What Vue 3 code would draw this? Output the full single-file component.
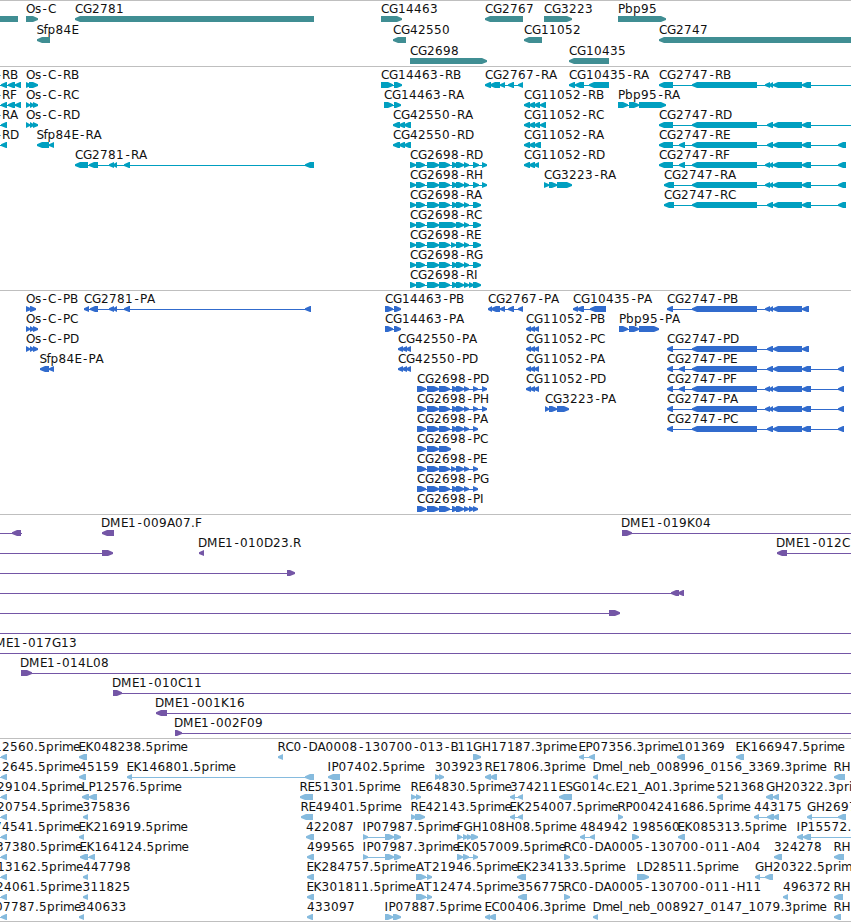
<template>
  <div class="browser">
    <section v-for="track in tracks" :key="track.name" class="track" :class="track.name">
      <svg class="canvas" width="851" :height="track.height">
        <g v-for="(item, i) in track.items" :key="i" :transform="`translate(0 ${item.row * track.pitch})`">
          <rect v-if="item.to > item.from" :x="item.from" y="18" :width="item.to - item.from" height="1"/>
          <polygon v-for="(exon, j) in item.exons" :key="j" :points="arrow(exon, item.dir)"/>
          <text v-if="item.label" :x="glyphs(item.label, item.x)" y="12">{{ item.label }}</text>
        </g>
      </svg>
    </section>
  </div>
</template>

<script setup>
// glyph advances of the label font, everything else is 8px wide
const advances = {
  G: 9, O: 9, D: 9, H: 9, M: 11, E: 7, F: 7, L: 7, S: 7, B: 7, P: 7, I: 4,
  '-': 7, '.': 4, _: 6, s: 6, f: 4, r: 5, i: 3, m: 11, e: 7, l: 3, n: 7, c: 6
};

function glyphs(text, start) {
  let x = start;
  return [...text].map(char => {
    // the hyphen is narrower than its cell, so center it
    const current = char === '-' ? x + 1.5 : x;
    x += advances[char] || 8;
    return current;
  }).join(' ');
}

function arrow([a, b], dir) {
  const head = Math.min(5, b - a);
  if (dir === 'L') {
    return `${a},17.3 ${a + head},15 ${b},15 ${b},21 ${a + head},21 ${a},18.9`;
  }
  return `${b},17.3 ${b - head},15 ${a},15 ${a},21 ${b - head},21 ${b},18.9`;
}

// spans are written as "start-end start-end", the line joins the first and the last
function f(row, label, dir, spans, opts = {}) {
  const exons = spans ? spans.split(' ').map(s => s.split('-').map(Number)) : [];
  const first = exons.length ? exons[0][0] : 0;
  const last = exons.length ? exons[exons.length - 1][1] : 0;
  return {
    row,
    label,
    dir,
    exons,
    x: opts.x ?? first,
    from: opts.from ?? first,
    to: opts.to ?? last
  };
}

const genes = [
  { row: 0, label: '', dir: 'L', exons: [[-10, 18]], x: 0, from: 0, to: 18 },
  f(0, 'Os-C', 'R', '26-38'),
  f(0, 'CG2781', 'L', '75-314'),
  f(0, 'CG14463', 'R', '381-402'),
  f(0, 'CG2767', 'L', '485-523'),
  f(0, 'CG3223', 'R', '544-572'),
  f(0, 'Pbp95', 'R', '618-666'),
  f(1, 'Sfp84E', 'L', '37-50', { x: 36.5 }),
  f(1, 'CG42550', 'L', '393-406'),
  f(1, 'CG11052', 'L', '524-542'),
  f(1, 'CG2747', 'L', '659-900'),
  f(2, 'CG2698', 'R', '410-487'),
  f(2, 'CG10435', 'L', '569-609')
];

const transcripts = [
  f(0, '-RB', 'L', '1-7 8-15 15-21', { x: -5, from: 0 }),
  f(1, '-RF', 'L', '1-7 8-15 15-21', { x: -5, from: 0 }),
  f(2, '-RA', 'L', '1-7', { x: -5, from: 0 }),
  f(3, '-RD', 'L', '1-7', { x: -5, from: 0 }),
  f(0, 'Os-C-RB', 'R', '26-31 29-38'),
  f(1, 'Os-C-RC', 'R', '26-30 30-34 33-38'),
  f(2, 'Os-C-RD', 'R', '26-30 30-34 33-38'),
  f(3, 'Sfp84E-RA', 'L', '37-49 49-54', { x: 36.5 }),
  f(4, 'CG2781-RA', 'L', '75-88 89-98 109-114 113-117 124-130 305-314'),
  f(0, 'CG14463-RB', 'R', '381-393 394-402'),
  f(1, 'CG14463-RA', 'R', '384-393 394-401'),
  f(2, 'CG42550-RA', 'L', '393-400 399-405 404-411'),
  f(3, 'CG42550-RD', 'L', '393-400 399-405 404-411'),
  f(4, 'CG2698-RD', 'R', '410-416 416-425 427-439 439-450 452-458 456-464 464-469 473-479 482-487'),
  f(5, 'CG2698-RH', 'R', '410-416 416-425 427-439 439-450 452-458 456-464 464-469 473-479 482-487'),
  f(6, 'CG2698-RA', 'R', '410-416 416-425 427-439 439-450 452-458 456-464 464-469 473-481'),
  f(7, 'CG2698-RC', 'R', '410-416 416-425 427-439 439-457 456-464 464-469 473-481'),
  f(8, 'CG2698-RE', 'R', '410-416 416-425 427-439 439-450 451-456 456-464 464-469 473-481'),
  f(9, 'CG2698-RG', 'R', '410-416 416-425 427-439 439-450 452-458 456-464 464-469 473-481'),
  f(10, 'CG2698-RI', 'R', '410-416 416-425 427-439 439-450 452-458 456-464 464-469 469-474 473-481'),
  f(0, 'CG2767-RA', 'L', '485-491 490-500 500-505 508-514 518-523'),
  f(0, 'CG10435-RA', 'L', '569-575 575-584 589-609'),
  f(1, 'CG11052-RB', 'L', '524-530 529-535 534-540 540-546'),
  f(2, 'CG11052-RC', 'L', '524-530 529-535 534-540 540-546'),
  f(3, 'CG11052-RA', 'L', '524-530 529-535 534-541'),
  f(4, 'CG11052-RD', 'L', '524-530 529-535 534-539'),
  f(5, 'CG3223-RA', 'R', '544-549 549-557 557-572'),
  f(1, 'Pbp95-RA', 'R', '618-628 629-639 639-666'),
  f(0, 'CG2747-RB', 'L', '659-673 692-757 765-770 769-773 773-802 802-811', { to: 851 }),
  f(2, 'CG2747-RD', 'L', '659-673 692-757 767-773 773-802 802-811', { to: 851 }),
  f(3, 'CG2747-RE', 'L', '659-673 679-685 692-757 767-773 773-802 802-811 838-846'),
  f(4, 'CG2747-RF', 'L', '659-673 679-685 692-757 765-770 769-773 773-802 802-811 838-846'),
  f(5, 'CG2747-RA', 'L', '664-674 692-757 765-770 769-773 773-802 802-811 838-846'),
  f(6, 'CG2747-RC', 'L', '664-674 692-757 767-773 773-802 802-811 838-846')
];

const proteins = [
  f(0, 'Os-C-PB', 'R', '26-31 30-36'),
  f(1, 'Os-C-PC', 'R', '26-30 30-34 33-38'),
  f(2, 'Os-C-PD', 'R', '26-30 30-34 33-38'),
  f(3, 'Sfp84E-PA', 'L', '40-49 49-54', { x: 39.5 }),
  f(0, 'CG2781-PA', 'L', '84-89 90-98 109-114 113-117 124-130 305-311'),
  f(0, 'CG14463-PB', 'R', '385-393 394-401'),
  f(1, 'CG14463-PA', 'R', '385-393 394-401'),
  f(2, 'CG42550-PA', 'L', '398-403 402-407 406-411'),
  f(3, 'CG42550-PD', 'L', '398-403 402-407 406-411'),
  f(4, 'CG2698-PD', 'R', '417-426 427-439 439-450 452-458 456-464 464-469 473-478 482-487'),
  f(5, 'CG2698-PH', 'R', '417-426 427-439 439-450 452-458 456-464 464-469 473-478 482-487'),
  f(6, 'CG2698-PA', 'R', '417-426 427-439 439-450 452-458 456-464 464-469 473-478'),
  f(7, 'CG2698-PC', 'R', '417-426 427-439 439-451'),
  f(8, 'CG2698-PE', 'R', '417-426 427-439 439-450 451-456 456-464 464-469 473-478'),
  f(9, 'CG2698-PG', 'R', '417-426 427-439 439-450 452-458 456-464 464-469 473-478'),
  f(10, 'CG2698-PI', 'R', '417-426 427-439 439-450 452-458 456-464 464-469 469-474 473-478'),
  f(0, 'CG2767-PA', 'L', '488-492 491-500 500-505 508-514 518-523'),
  f(0, 'CG10435-PA', 'L', '573-578 577-584 590-606'),
  f(1, 'CG11052-PB', 'L', '526-531 530-535 534-539'),
  f(2, 'CG11052-PC', 'L', '526-531 530-535 534-539'),
  f(3, 'CG11052-PA', 'L', '526-531 530-535 534-539'),
  f(4, 'CG11052-PD', 'L', '526-531 530-535 534-539'),
  f(5, 'CG3223-PA', 'R', '545-549 549-557 557-569'),
  f(1, 'Pbp95-PA', 'R', '619-628 629-639 639-659'),
  f(0, 'CG2747-PB', 'L', '667-673 692-757 765-770 769-773 773-802 802-809'),
  f(2, 'CG2747-PD', 'L', '667-673 692-757 767-773 773-802 802-809'),
  f(3, 'CG2747-PE', 'L', '667-673 679-685 692-757 767-773 773-802 802-811 838-844'),
  f(4, 'CG2747-PF', 'L', '667-673 679-685 692-757 765-770 769-773 773-802 802-811 838-844'),
  f(5, 'CG2747-PA', 'L', '667-673 692-757 765-770 769-773 773-802 802-811 838-844'),
  f(6, 'CG2747-PC', 'L', '667-673 692-757 767-773 773-802 802-811 838-844')
];

const clones = [
  f(0, '', 'L', '12-21', { from: 0, to: 22 }),
  f(0, 'DME1-009A07.F', 'L', '102-114', { x: 101 }),
  f(0, 'DME1-019K04', 'R', '622-632', { x: 621, to: 851 }),
  f(1, '', 'R', '102-113', { from: 0 }),
  f(1, 'DME1-010D23.R', 'L', '199-204', { x: 198 }),
  f(1, 'DME1-012C', 'L', '777-787', { x: 776, to: 851 }),
  f(2, '', 'R', '287-295', { from: 0 }),
  f(3, '', 'L', '671-679 678-684', { from: 0 }),
  f(4, '', 'R', '609-620', { from: 0 }),
  f(5, '', 'R', '', { to: 851 }),
  f(6, 'DME1-017G13', 'R', '', { x: -14, to: 851 }),
  f(7, 'DME1-014L08', 'R', '21-32', { x: 20, to: 851 }),
  f(8, 'DME1-010C11', 'R', '113-122', { x: 112, to: 851 }),
  f(9, 'DME1-001K16', 'L', '156-167', { x: 155, to: 851 }),
  f(10, 'DME1-002F09', 'R', '175-182', { x: 174, to: 851 })
];

const ests = [
  f(0, '12560.5prime', 'L', '1-7', { x: -6, from: 0 }),
  f(1, '12645.5prime', 'L', '1-7', { x: -6, from: 0 }),
  f(2, '29104.5prime', 'L', '1-7', { x: -3, from: 0 }),
  f(3, '20754.5prime', 'L', '1-7', { x: -3, from: 0 }),
  f(4, '74541.5prime', 'L', '1-7', { x: -6, from: 0 }),
  f(5, '37380.5prime', 'L', '1-7', { x: -4, from: 0 }),
  f(6, '13162.5prime', 'L', '1-7', { x: -3, from: 0 }),
  f(7, '24061.5prime', 'L', '1-7', { x: -4, from: 0 }),
  f(8, '07787.5prime', 'L', '1-7', { x: -5, from: 0 }),

  f(0, 'EK048238.5prime', 'L', '79-87', { x: 78.5 }),
  f(1, '45159', 'L', '79-86'),
  f(1, 'EK146801.5prime', 'L', '127-132 305-314', { x: 126.5 }),
  f(2, 'LP12576.5prime', 'L', '82-89 89-97', { x: 81.5 }),
  f(3, '375836', 'L', '83-88', { x: 82.5 }),
  f(4, 'EK216919.5prime', 'L', '79-84', { x: 78.5 }),
  f(5, 'EK164124.5prime', 'L', '80-88 89-95', { x: 79.5 }),
  f(6, '447798', 'L', '83-88'),
  f(7, '311825', 'L', '83-88', { x: 82.5 }),
  f(8, '340633', 'L', '79-84', { x: 78.5 }),

  f(0, 'RC0-DA0008-130700-013-B11', 'L', '278-283', { x: 277.5 }),
  f(0, 'GH17187.3prime', 'R', '473-481'),
  f(1, 'IP07402.5prime', 'L', '328-340', { x: 327.5 }),
  f(1, '303923', 'R', '435-440 439-444'),
  f(1, 'RE17806.3prime', 'L', '485-491 490-497', { x: 484.5 }),
  f(2, 'RE51301.5prime', 'L', '300-313', { x: 299.5 }),
  f(2, 'RE64830.5prime', 'R', '411-416 416-421', { x: 410.5 }),
  f(2, '374211', 'L', '510-515 518-523'),
  f(3, 'RE49401.5prime', 'L', '301-313', { x: 300.5 }),
  f(3, 'RE42143.5prime', 'R', '411-416 415-425', { x: 410.5 }),
  f(3, 'EK254007.5prime', 'L', '510-515 518-523', { x: 509.5 }),
  f(4, '422087', 'L', '306-314'),
  f(4, 'IP07987.5prime', 'R', '363-368 385-394 394-401', { x: 362.5 }),
  f(4, 'FGH108H08.5prime', 'R', '457-462 463-468 467-472 471-478', { x: 456.5 }),
  f(5, '499565', 'L', '307-314'),
  f(5, 'IP07987.3prime', 'R', '363-368 385-394 394-401', { x: 362.5 }),
  f(5, 'EK057009.5prime', 'R', '457-463 463-469 473-478', { x: 456.5 }),
  f(6, 'EK284757.5prime', 'L', '307-314', { x: 306.5 }),
  f(6, 'AT21946.5prime', 'R', '416-426 427-432'),
  f(6, 'EK234133.5prime', 'L', '517-526', { x: 516.5 }),
  f(7, 'EK301811.5prime', 'L', '307-314', { x: 306.5 }),
  f(7, 'AT12474.5prime', 'R', '416-426 427-432'),
  f(7, '356775', 'L', '518-527', { x: 517.5 }),
  f(8, '433097', 'L', '307-313'),
  f(8, 'IP07887.5prime', 'R', '385-393 393-401', { x: 384.5 }),
  f(8, 'EC00406.3prime', 'L', '485-490 489-496', { x: 484.5 }),

  f(0, 'EP07356.3prime', 'L', '579-584 589-595', { x: 578.5 }),
  f(0, '101369', 'L', '677-685'),
  f(0, 'EK166947.5prime', 'L', '736-744', { x: 735.5 }),
  f(1, 'Dmel_neb_008996_0156_3369.3prime', 'L', '593-598', { x: 592.5 }),
  f(1, 'RH', 'L', '834-845', { x: 833.5 }),
  f(2, 'ESG014c.E21_A01.3prime', 'L', '559-572', { x: 558.5 }),
  f(2, '521368', 'L', '717-723', { x: 716.5 }),
  f(2, 'GH20322.3prime', 'L', '766-773 773-779'),
  f(3, 'RP004241686.5prime', 'R', '618-623', { x: 617.5 }),
  f(3, '443175', 'L', '754-759 767-774 773-779'),
  f(3, 'GH2697', 'L', '807-812 838-846'),
  f(4, '484942', 'L', '580-585 590-595'),
  f(4, '198560', 'R', '632-639'),
  f(4, 'EK085313.5prime', 'L', '678-685', { x: 677.5 }),
  f(4, 'IP15572.', 'L', '797-803 803-811', { x: 796.5, to: 851 }),
  f(5, 'RC0-DA0005-130700-011-A04', 'R', '564-570', { x: 563.5 }),
  f(5, '324278', 'L', '774-782'),
  f(5, 'RH', 'L', '834-844', { x: 833.5 }),
  f(6, 'LD28511.5prime', 'R', '637-649', { x: 636.5 }),
  f(6, 'GH20322.5prime', 'L', '755-760 765-773'),
  f(7, 'RC0-DA0005-130700-011-H11', 'R', '564-570', { x: 563.5 }),
  f(7, '496372', 'L', '783-788'),
  f(7, 'RH', 'L', '834-843', { x: 833.5 }),
  f(8, 'Dmel_neb_008927_0147_1079.3prime', 'L', '593-598', { x: 592.5 }),
  f(8, 'RH', 'L', '834-841', { x: 833.5 })
];

const tracks = [
  { name: 'genes', height: 65, pitch: 21, items: genes },
  { name: 'transcripts', height: 223, pitch: 20, items: transcripts },
  { name: 'proteins', height: 223, pitch: 20, items: proteins },
  { name: 'clones', height: 223, pitch: 20, items: clones },
  { name: 'ests', height: 182, pitch: 20, items: ests }
];
</script>

<style>
body {
  margin: 0;
  background: #fff;
}
</style>

<style scoped>
.browser {
  display: flex;
  flex-direction: column;
  width: 851px;
  height: 922px;
  overflow: hidden;
  background: #fff;
}

.track {
  border-top: 1px solid #bfbfbf;
}

.track:last-child {
  border-bottom: 1px solid #bfbfbf;
}

.canvas {
  display: block;
  overflow: hidden;
}

.canvas text {
  font-family: "DejaVu Sans", sans-serif;
  font-size: 12px;
  fill: #111;
}

.genes {
  fill: #408e93;
}

.transcripts {
  fill: #009fc0;
}

.proteins {
  fill: #316bcd;
}

.clones {
  fill: #7456a6;
}

.ests {
  fill: #86bbde;
}
</style>
